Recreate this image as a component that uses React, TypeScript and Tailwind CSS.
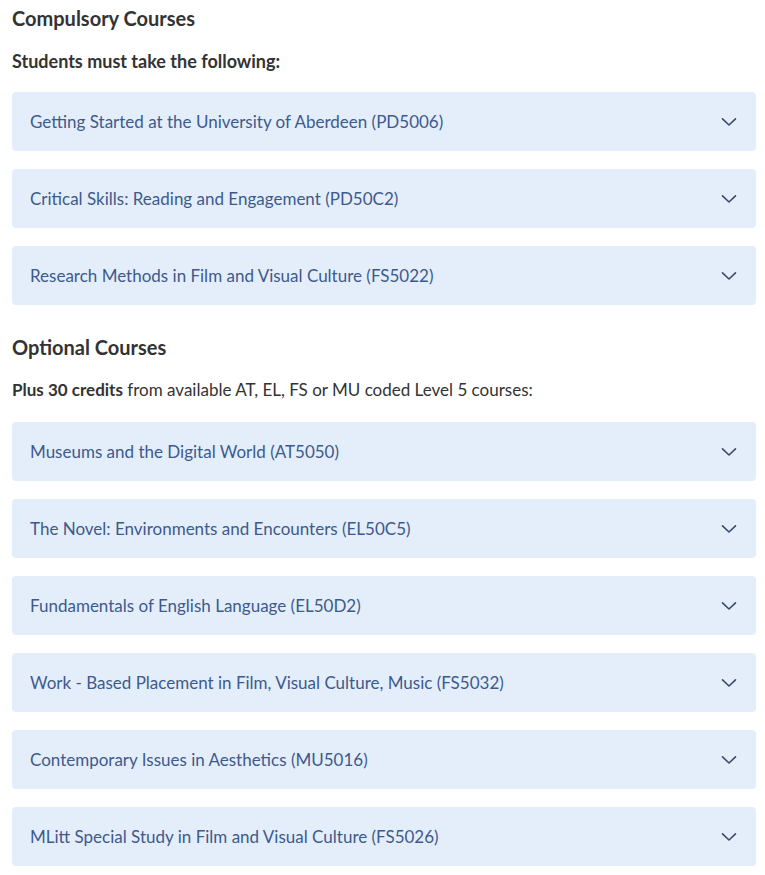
const COMPULSORY = [
  "Getting Started at the University of Aberdeen (PD5006)",
  "Critical Skills: Reading and Engagement (PD50C2)",
  "Research Methods in Film and Visual Culture (FS5022)",
];

const OPTIONAL = [
  "Museums and the Digital World (AT5050)",
  "The Novel: Environments and Encounters (EL50C5)",
  "Fundamentals of English Language (EL50D2)",
  "Work - Based Placement in Film, Visual Culture, Music (FS5032)",
  "Contemporary Issues in Aesthetics (MU5016)",
  "MLitt Special Study in Film and Visual Culture (FS5026)",
];

function Chevron() {
  return (
    <svg width="16" height="10" viewBox="0 0 16 10" fill="none" className="shrink-0">
      <path d="M1.5 1.8 L8 8 L14.5 1.8" stroke="#3b4a6b" strokeWidth="1.6" strokeLinecap="round" strokeLinejoin="round" />
    </svg>
  );
}

function CourseRow({ title }: { title: string }) {
  return (
    <button className="w-full h-[59px] flex items-center justify-between pl-[18px] pr-[19px] rounded-[4px] bg-[#e4eefb] text-left">
      <span className="text-[17px] text-[#3d5a8c]">{title}</span>
      <Chevron />
    </button>
  );
}

export default function App() {
  return (
    <div className="min-h-screen bg-white pl-3 pr-[9px] pt-[6px] text-[#333] font-['Lato','Liberation_Sans',sans-serif]">
      <h2 className="text-[20px] font-bold leading-[24px]">Compulsory Courses</h2>
      <p className="mt-[19px] text-[18px] font-bold leading-[24px]">Students must take the following:</p>
      <div className="mt-[19px] flex flex-col gap-[18px]">
        {COMPULSORY.map((c) => (
          <CourseRow key={c} title={c} />
        ))}
      </div>

      <h2 className="mt-[30px] text-[20px] font-bold leading-[24px]">Optional Courses</h2>
      <p className="mt-[19px] text-[17px] leading-[24px]">
        <strong className="font-bold">Plus 30 credits</strong> from available AT, EL, FS or MU coded Level 5 courses:
      </p>
      <div className="mt-[20px] flex flex-col gap-[18px]">
        {OPTIONAL.map((c) => (
          <CourseRow key={c} title={c} />
        ))}
      </div>
    </div>
  );
}
